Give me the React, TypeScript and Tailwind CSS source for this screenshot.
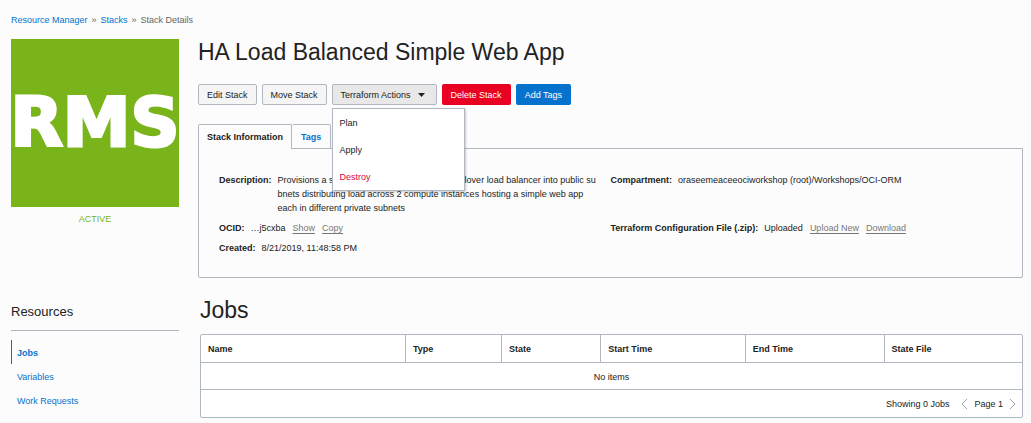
import { useState } from "react";
import type { ReactNode } from "react";

const columns = [
  { label: "Name", width: "w-[24.9%]" },
  { label: "Type", width: "w-[11.7%]" },
  { label: "State", width: "w-[12.1%]" },
  { label: "Start Time", width: "w-[17.6%]" },
  { label: "End Time", width: "w-[16.9%]" },
  { label: "State File", width: "w-[16.8%]" },
];

function Field({ label, children }: { label: string; children: ReactNode }) {
  return (
    <div className="flex gap-[6px]">
      <dt className="shrink-0 font-bold">{label}:</dt>
      <dd className="min-w-0">{children}</dd>
    </div>
  );
}

function TextAction({ children }: { children: ReactNode }) {
  return (
    <button type="button" className="ml-[7px] text-[#777] underline underline-offset-2">
      {children}
    </button>
  );
}

function Chevron({ points }: { points: string }) {
  return (
    <svg width="7" height="12" viewBox="0 0 7 12" fill="none" stroke="#a0a4a8" strokeWidth="1" aria-hidden="true">
      <polyline points={points} />
    </svg>
  );
}

export default function App() {
  const [menuOpen, setMenuOpen] = useState(true);
  const plainButton = "h-[21px] rounded-xs border border-[#b0b7c1] px-2";

  return (
    <div className="min-h-screen bg-[#fcfcfc] pt-[13px] pr-2 pb-[5px] pl-[11px] font-['Liberation_Sans',Arial,sans-serif] text-[9px] leading-[14px] text-[#222]">
      <nav aria-label="Breadcrumb" className="flex gap-1 text-[#666]">
        <a href="#manager" className="text-[#0572ce]">Resource Manager</a>
        <span>»</span>
        <a href="#stacks" className="text-[#0572ce]">Stacks</a>
        <span>»</span>
        <span>Stack Details</span>
      </nav>

      <div className="mt-3 flex gap-[19px]">
        <aside className="w-[168px] shrink-0">
          <div className="flex h-[168px] items-center justify-center bg-[#78b41a] font-['DejaVu_Sans',sans-serif] text-[68px] leading-none font-bold text-white [-webkit-text-stroke:3px_white]">
            RMS
          </div>
          <p className="mt-[5px] text-center text-[#78b41a]">ACTIVE</p>
        </aside>

        <main className="min-w-0 flex-1">
          <h1 className="text-[23px] leading-[26px]">HA Load Balanced Simple Web App</h1>

          <div className="mt-[19px] flex gap-[5px]">
            <button type="button" className={`${plainButton} bg-[#f5f5f5]`}>Edit Stack</button>
            <button type="button" className={`${plainButton} bg-[#f5f5f5]`}>Move Stack</button>
            <div className="relative">
              <button
                type="button"
                aria-haspopup="menu"
                aria-expanded={menuOpen}
                onClick={() => setMenuOpen(!menuOpen)}
                className={`${plainButton} flex items-center gap-[7px] bg-[#e8e8e8]`}
              >
                Terraform Actions
                <svg width="7" height="4" viewBox="0 0 7 4" fill="#222" className="mr-[3px]" aria-hidden="true">
                  <path d="M0 0h7L3.5 4z" />
                </svg>
              </button>
              {menuOpen && (
                <div role="menu" className="absolute top-6 left-0 z-10 flex w-[133px] flex-col border border-[#b0b7c1] bg-white shadow-[1px_1px_2px_rgba(0,0,0,0.2)]">
                  <button type="button" role="menuitem" className="h-[27px] px-[7px] text-left">Plan</button>
                  <button type="button" role="menuitem" className="h-[27px] px-[7px] text-left">Apply</button>
                  <button type="button" role="menuitem" className="h-[27px] px-[7px] text-left text-[#d9063b]">Destroy</button>
                </div>
              )}
            </div>
            <button type="button" className="h-[21px] rounded-xs bg-[#e90022] px-[9px] text-white">Delete Stack</button>
            <button type="button" className="h-[21px] rounded-xs bg-[#0572ce] px-[9px] text-white">Add Tags</button>
          </div>

          <div role="tablist" className="mt-[19px] -mb-px flex font-bold">
            <button type="button" role="tab" aria-selected="true" className="h-[25px] rounded-t-xs border border-b-0 border-[#b0b7c1] bg-[#fcfcfc] px-2">
              Stack Information
            </button>
            <button type="button" role="tab" aria-selected="false" className="h-[25px] rounded-t-xs border border-l-0 border-[#b0b7c1] px-[9px] text-[#0572ce]">
              Tags
            </button>
          </div>

          <dl className="grid min-h-[130px] grid-cols-2 content-start gap-y-[6px] rounded-b-xs border border-[#b0b7c1] px-5 pt-6">
            <Field label="Description">
              Provisions a simple web application through failover load balancer into public su
              <br />
              bnets distributing load across 2 compute instances hosting a simple web app
              <br />
              each in different private subnets
            </Field>
            <Field label="Compartment">oraseemeaceeociworkshop (root)/Workshops/OCI-ORM</Field>
            <Field label="OCID">
              …j5cxba<TextAction>Show</TextAction><TextAction>Copy</TextAction>
            </Field>
            <Field label="Terraform Configuration File (.zip)">
              Uploaded<TextAction>Upload New</TextAction><TextAction>Download</TextAction>
            </Field>
            <Field label="Created">8/21/2019, 11:48:58 PM</Field>
          </dl>
        </main>
      </div>

      <div className="mt-[19px] flex gap-[21px]">
        <nav aria-labelledby="resources" className="w-[168px] shrink-0">
          <h2 id="resources" className="border-b border-[#b0b7c1] pt-[6px] pb-[9px] text-[13px] leading-[18px]">
            Resources
          </h2>
          <ul className="mt-[9px] text-[#0572ce]">
            <li className="h-6 border-l border-[#0572ce] pt-[6px] pl-[5px] font-bold">
              <a href="#jobs">Jobs</a>
            </li>
            <li className="h-6 pt-[6px] pl-[6px]"><a href="#variables">Variables</a></li>
            <li className="h-6 pt-[6px] pl-[6px]"><a href="#requests">Work Requests</a></li>
          </ul>
        </nav>

        <section className="min-w-0 flex-1">
          <h2 className="text-[23px] leading-[26px]">Jobs</h2>
          <div className="mt-[11px] rounded-xs border border-[#b0b7c1] bg-white">
            <table className="w-full table-fixed border-collapse">
              <thead>
                <tr className="h-[27px] border-b border-[#b0b7c1]">
                  {columns.map((column) => (
                    <th key={column.label} scope="col" className={`${column.width} border-l border-[#b0b7c1] px-[7px] pt-[2px] text-left first:border-l-0`}>
                      {column.label}
                    </th>
                  ))}
                </tr>
              </thead>
              <tbody>
                <tr className="h-[27px] border-b border-[#b0b7c1]">
                  <td colSpan={6} className="pt-[2px] text-center">No items</td>
                </tr>
              </tbody>
            </table>
            <div className="flex h-[27px] items-center justify-end pt-[2px] pr-[6px]">
              <span className="mr-3">Showing 0 Jobs</span>
              <button type="button" aria-label="Previous page"><Chevron points="6,1 1,6 6,11" /></button>
              <span className="mx-[6px]">Page 1</span>
              <button type="button" aria-label="Next page"><Chevron points="1,1 6,6 1,11" /></button>
            </div>
          </div>
        </section>
      </div>
    </div>
  );
}
